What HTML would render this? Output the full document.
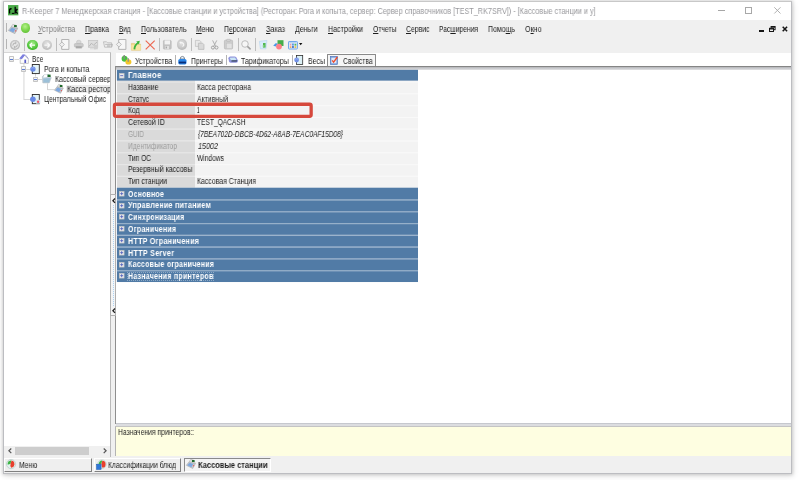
<!DOCTYPE html><html><head><meta charset="utf-8"><style>
html,body{margin:0;padding:0;}
body{width:800px;height:480px;overflow:hidden;position:relative;background:#fff;font-family:"Liberation Sans", sans-serif;}
.t{position:absolute;white-space:nowrap;transform-origin:0 50%;will-change:transform;font-family:"Liberation Sans", sans-serif;}
u{text-decoration:underline;text-decoration-thickness:1px;text-underline-offset:1px;}
</style></head><body>
<div style="position:absolute;left:3px;top:1px;width:789px;height:473px;box-shadow:0 0 3px 1px rgba(0,0,0,0.13), 1px 2px 6px rgba(0,0,0,0.12);background:#f0f0f0;"></div>
<div style="position:absolute;left:4px;top:2px;width:787px;height:18px;background:#fff;"></div>
<svg style="position:absolute;left:7.9px;top:5px;overflow:visible" width="10.4" height="10.4" viewBox="0 0 10.4 10.4"><rect x="0" y="0" width="10.4" height="10.4" fill="#5cb85a"/><rect x="0.6" y="0.6" width="9.2" height="9.2" fill="#4aa848"/><path d="M1.6 3.8 V8.6 M1.6 4.8 Q2.2 3.6 3.6 3.8" stroke="#000" stroke-width="1.3" fill="none"/><path d="M3.8 8.4 H6.4" stroke="#000" stroke-width="1.1"/><path d="M7.2 1.8 V8.6 M9.4 4 L7.4 6.2 L9.6 8.6" stroke="#000" stroke-width="1.3" fill="none"/></svg>
<div class="t" style="left:21.75px;top:5.99px;font-size:8.4px;line-height:10px;color:#98989c;font-weight:normal;font-style:normal;transform:scaleX(0.8684);">R-Keeper 7 Менеджерская станция - [Кассовые станции и устройства] (Ресторан: Рога и копыта, сервер: Сервер справочников [TEST_RK7SRV]) - [Кассовые станции и у]</div>
<div style="position:absolute;left:717.5px;top:10.3px;width:7px;height:0.9px;background:#a6a6a6;"></div>
<div style="position:absolute;left:744.5px;top:7.3px;width:7.4px;height:6.6px;border:1px solid #a8a8a8;box-sizing:border-box;"></div>
<svg style="position:absolute;left:773.8px;top:7.3px;overflow:visible" width="6.8" height="6.8" viewBox="0 0 6.8 6.8"><path d="M0.3 0.3 L6.5 6.5 M6.5 0.3 L0.3 6.5" stroke="#a8a8a8" stroke-width="0.9"/></svg>
<div style="position:absolute;left:5.6px;top:23.4px;width:1.2px;height:9px;background:#b4b4b4;"></div>
<svg style="position:absolute;left:8.2px;top:23.6px;overflow:visible" width="10" height="10" viewBox="0 0 9.6 9.6"><path d="M0.3 6.2 L3.2 2.6 L9.2 4.4 L6.6 9.3 Z" fill="#c4c8cc" stroke="#a0a4a8" stroke-width="0.5"/><path d="M1.2 6.2 L3.6 3.6 L7 4.8 L5.2 8.2 Z" fill="#7ea8e0"/><path d="M3.2 2.6 L4.6 0.3 L7.4 1 L9.2 4.4 Z" fill="#e6e6e6" stroke="#a8a8a8" stroke-width="0.5"/><rect x="5.8" y="1" width="2.6" height="2" fill="#1f6a2a"/><rect x="6.8" y="6" width="1.2" height="1.2" fill="#e06060"/></svg>
<div style="position:absolute;left:20.6px;top:23.4px;width:9.6px;height:9.6px;border-radius:50%;background:radial-gradient(circle at 45% 35%,#b6f08c 0%,#7fd84f 45%,#55b52e 100%);"></div>
<div class="t" style="left:37.70px;top:23.72px;font-size:8.3px;line-height:10px;color:#808080;font-weight:normal;font-style:normal;transform:scaleX(0.8613);"><u>У</u>стройства</div>
<div class="t" style="left:85.00px;top:23.72px;font-size:8.3px;line-height:10px;color:#1e1e1e;font-weight:normal;font-style:normal;transform:scaleX(0.8557);"><u>П</u>равка</div>
<div class="t" style="left:119.00px;top:23.72px;font-size:8.3px;line-height:10px;color:#1e1e1e;font-weight:normal;font-style:normal;transform:scaleX(0.7651);"><u>В</u>ид</div>
<div class="t" style="left:140.50px;top:23.72px;font-size:8.3px;line-height:10px;color:#1e1e1e;font-weight:normal;font-style:normal;transform:scaleX(0.8448);"><u>П</u>ользователь</div>
<div class="t" style="left:196.00px;top:23.72px;font-size:8.3px;line-height:10px;color:#1e1e1e;font-weight:normal;font-style:normal;transform:scaleX(0.8022);"><u>М</u>еню</div>
<div class="t" style="left:224.00px;top:23.72px;font-size:8.3px;line-height:10px;color:#1e1e1e;font-weight:normal;font-style:normal;transform:scaleX(0.8266);">П<u>е</u>рсонал</div>
<div class="t" style="left:265.50px;top:23.72px;font-size:8.3px;line-height:10px;color:#1e1e1e;font-weight:normal;font-style:normal;transform:scaleX(0.8723);"><u>З</u>аказ</div>
<div class="t" style="left:295.00px;top:23.72px;font-size:8.3px;line-height:10px;color:#1e1e1e;font-weight:normal;font-style:normal;transform:scaleX(0.8392);"><u>Д</u>еньги</div>
<div class="t" style="left:328.00px;top:23.72px;font-size:8.3px;line-height:10px;color:#1e1e1e;font-weight:normal;font-style:normal;transform:scaleX(0.8599);"><u>Н</u>астройки</div>
<div class="t" style="left:372.50px;top:23.72px;font-size:8.3px;line-height:10px;color:#1e1e1e;font-weight:normal;font-style:normal;transform:scaleX(0.8187);"><u>О</u>тчеты</div>
<div class="t" style="left:405.50px;top:23.72px;font-size:8.3px;line-height:10px;color:#1e1e1e;font-weight:normal;font-style:normal;transform:scaleX(0.8268);"><u>С</u>ервис</div>
<div class="t" style="left:439.00px;top:23.72px;font-size:8.3px;line-height:10px;color:#1e1e1e;font-weight:normal;font-style:normal;transform:scaleX(0.8080);">Рас<u>ш</u>ирения</div>
<div class="t" style="left:488.00px;top:23.72px;font-size:8.3px;line-height:10px;color:#1e1e1e;font-weight:normal;font-style:normal;transform:scaleX(0.8421);">Помо<u>щ</u>ь</div>
<div class="t" style="left:524.50px;top:23.72px;font-size:8.3px;line-height:10px;color:#1e1e1e;font-weight:normal;font-style:normal;transform:scaleX(0.8544);">О<u>к</u>но</div>
<div style="position:absolute;left:759.3px;top:29.6px;width:5px;height:2.1px;background:#151515;"></div>
<svg style="position:absolute;left:769.2px;top:26.2px;overflow:visible" width="6.6" height="5.9" viewBox="0 0 6.6 5.9"><rect x="2.1" y="0.5" width="4" height="3.2" fill="none" stroke="#151515" stroke-width="1"/><rect x="0.5" y="2.3" width="4" height="3.2" fill="#f0f0f0" stroke="#151515" stroke-width="1"/><rect x="0.5" y="2.3" width="4" height="1.2" fill="#151515"/><rect x="2.1" y="0.5" width="4" height="1.2" fill="#151515"/></svg>
<svg style="position:absolute;left:781.8px;top:25.8px;overflow:visible" width="5.8" height="6" viewBox="0 0 5.8 6"><path d="M0.7 0.7 L5.1 5.3 M5.1 0.7 L0.7 5.3" stroke="#151515" stroke-width="1.5"/></svg>
<div style="position:absolute;left:5.6px;top:39px;width:1.2px;height:10px;background:#b4b4b4;"></div>
<div style="position:absolute;left:24.4px;top:38px;width:1px;height:13px;background:#bdbdbd;"></div>
<div style="position:absolute;left:56px;top:38px;width:1px;height:13px;background:#bdbdbd;"></div>
<div style="position:absolute;left:159.4px;top:38px;width:1px;height:13px;background:#bdbdbd;"></div>
<div style="position:absolute;left:191px;top:38px;width:1px;height:13px;background:#bdbdbd;"></div>
<div style="position:absolute;left:237.5px;top:38px;width:1px;height:13px;background:#bdbdbd;"></div>
<div style="position:absolute;left:254.8px;top:38px;width:1px;height:13px;background:#bdbdbd;"></div>
<div style="position:absolute;left:10px;top:39.5px;width:10.2px;height:10.2px;border-radius:50%;background:radial-gradient(circle at 50% 45%,#d8d8d8 0 40%,#bdbdbd 60%,#a4a4a4 100%);"></div>
<svg style="position:absolute;left:10px;top:39.5px;overflow:visible" width="10.2" height="10.2" viewBox="0 0 10.2 10.2"><circle cx="5.1" cy="5.1" r="3.4" fill="#e6e6e6"/><path d="M2.8 5.6 Q2.9 2.9 5.6 2.9 M5.2 1.9 L6.3 2.9 L5.2 3.9 M7.4 4.6 Q7.3 7.3 4.6 7.3 M5 6.3 L3.9 7.3 L5 8.3" stroke="#a9a9a9" stroke-width="0.9" fill="none"/></svg>
<div style="position:absolute;left:27.4px;top:39.6px;width:10.4px;height:10.4px;border-radius:50%;background:radial-gradient(circle at 50% 35%,#a6ee8a 0%,#4fc43a 60%,#2f9a22 100%);"></div>
<svg style="position:absolute;left:27.4px;top:39.6px;overflow:visible" width="10.4" height="10.4" viewBox="0 0 10.4 10.4"><path d="M2.6 5.2 H8 M2.6 5.2 L5 2.9 M2.6 5.2 L5 7.5" stroke="#fff" stroke-width="1.3" fill="none"/></svg>
<div style="position:absolute;left:41.6px;top:39.6px;width:10.4px;height:10.4px;border-radius:50%;background:radial-gradient(circle at 50% 35%,#e4e4e4 0%,#c6c6c6 60%,#adadad 100%);"></div>
<svg style="position:absolute;left:41.6px;top:39.6px;overflow:visible" width="10.4" height="10.4" viewBox="0 0 10.4 10.4"><path d="M2.4 5.2 H7.8 M7.8 5.2 L5.4 2.9 M7.8 5.2 L5.4 7.5" stroke="#f8f8f8" stroke-width="1.3" fill="none"/></svg>
<svg style="position:absolute;left:58.8px;top:39.2px;overflow:visible" width="10.4" height="11" viewBox="0 0 10.4 11"><path d="M2.7 0.5 H9.9 V10.4 H2.7 Z" fill="#f7f7f7" stroke="#adadad" stroke-width="0.9"/><path d="M0.4 5.5 L2.9 3 L5.4 5.5 L2.9 8 Z" fill="#efefef" stroke="#b0b0b0" stroke-width="0.8"/></svg>
<svg style="position:absolute;left:116.4px;top:39.2px;overflow:visible" width="10.4" height="11" viewBox="0 0 10.4 11"><path d="M2.7 0.5 H9.9 V10.4 H2.7 Z" fill="#f7f7f7" stroke="#adadad" stroke-width="0.9"/><path d="M0.4 5.5 L2.9 3 L5.4 5.5 L2.9 8 Z" fill="#efefef" stroke="#b0b0b0" stroke-width="0.8"/></svg>
<svg style="position:absolute;left:74px;top:40.2px;overflow:visible" width="9.6" height="8.6" viewBox="0 0 9.6 8.6"><rect x="2.6" y="0.4" width="4.4" height="3.6" rx="1.6" fill="#d9d9d9" stroke="#bdbdbd" stroke-width="0.6"/><rect x="0.4" y="3.6" width="8.8" height="3.4" rx="0.8" fill="#cbcbcb" stroke="#b6b6b6" stroke-width="0.6"/><rect x="1.8" y="6.2" width="6" height="2.2" fill="#a9a9a9"/></svg>
<svg style="position:absolute;left:88px;top:40px;overflow:visible" width="10.2" height="9.6" viewBox="0 0 10.2 9.6"><rect x="0.5" y="0.5" width="9.2" height="6.8" fill="#dedede" stroke="#c6c6c6" stroke-width="0.8"/><path d="M1 6.5 L3.5 3.2 L5.5 5.2 L9 2" stroke="#b8b8b8" stroke-width="1" fill="none"/><rect x="6" y="5" width="3.8" height="4.3" fill="#cfcfcf"/><path d="M2 8.8 H8" stroke="#d0d0d0" stroke-width="0.8"/></svg>
<svg style="position:absolute;left:102.5px;top:40.8px;overflow:visible" width="10" height="7" viewBox="0 0 10 7"><path d="M0.5 0.8 H3.6 L4.6 1.8 H8.6 V6.2 H1.6 Z" fill="#ececec" stroke="#b8b8b8" stroke-width="0.8"/><path d="M2.2 3.4 H9.5 L8.6 6.2" stroke="#b0b0b0" stroke-width="0.8" fill="none"/><path d="M4 5 H7.5" stroke="#a0a0a0" stroke-width="0.8"/></svg>
<svg style="position:absolute;left:130.8px;top:39.6px;overflow:visible" width="10" height="10.6" viewBox="0 0 10 10.6"><path d="M0.4 3.4 H3.6 L4.4 4.2 H9.6 V10.2 H0.4 Z" fill="#f2d98c" stroke="#dcc070" stroke-width="0.6"/><path d="M0.4 5 H9.6 V10.2 H0.4 Z" fill="#f6e4a4"/><path d="M3.4 9.4 Q3.6 5 7.2 2.8" stroke="#3cb43c" stroke-width="1.8" fill="none"/><path d="M5.2 1.4 L8.8 0.8 L8 4.4 Z" fill="#3cb43c"/></svg>
<svg style="position:absolute;left:145.4px;top:39.9px;overflow:visible" width="10.4" height="10.1" viewBox="0 0 10.4 10.1"><path d="M0.7 0.7 L9.7 9.4 M9.7 0.7 L0.7 9.4" stroke="#ec6650" stroke-width="1.15"/></svg>
<svg style="position:absolute;left:163.4px;top:39.5px;overflow:visible" width="8.6" height="9.5" viewBox="0 0 8.6 9.5"><rect x="0.4" y="0.4" width="7.8" height="8.7" rx="0.8" fill="#c3c3c3" stroke="#b3b3b3" stroke-width="0.6"/><rect x="1.6" y="0.4" width="5.4" height="4" fill="#f2f2f2"/><rect x="2.2" y="6" width="3.8" height="3.1" fill="#e2e2e2"/><rect x="2.8" y="6.6" width="1" height="1.8" fill="#9a9a9a"/></svg>
<div style="position:absolute;left:176.9px;top:39.3px;width:10.5px;height:10.5px;border-radius:50%;background:radial-gradient(circle at 45% 40%,#e2e2e2 0%,#c8c8c8 50%,#a9a9a9 100%);"></div>
<svg style="position:absolute;left:176.9px;top:39.3px;overflow:visible" width="10.5" height="10.5" viewBox="0 0 10.5 10.5"><path d="M3 4 Q5 3 6.4 4.6 Q7.6 6.6 5.4 7.4" stroke="#f6f6f6" stroke-width="1.1" fill="none"/><path d="M2.2 3 L4.2 2.6 L3.8 4.8 Z" fill="#f6f6f6"/></svg>
<svg style="position:absolute;left:194.7px;top:39.8px;overflow:visible" width="9.4" height="9.8" viewBox="0 0 9.4 9.8"><path d="M0.4 0.4 H4.6 L6 1.8 V6.4 H0.4 Z" fill="#e9e9e9" stroke="#bdbdbd" stroke-width="0.7"/><path d="M3.4 3.2 H7.6 L9 4.6 V9.4 H3.4 Z" fill="#d9d9d9" stroke="#b6b6b6" stroke-width="0.7"/></svg>
<svg style="position:absolute;left:211px;top:39.8px;overflow:visible" width="7.4" height="9.8" viewBox="0 0 7.4 9.8"><path d="M1.6 0.4 L4.6 6.2 M5.8 0.4 L2.8 6.2" stroke="#a8a8a8" stroke-width="0.9" fill="none"/><circle cx="1.9" cy="7.6" r="1.5" fill="none" stroke="#9a9a9a" stroke-width="0.9"/><circle cx="5.5" cy="7.6" r="1.5" fill="none" stroke="#9a9a9a" stroke-width="0.9"/></svg>
<svg style="position:absolute;left:224px;top:39.2px;overflow:visible" width="9" height="10.4" viewBox="0 0 9 10.4"><rect x="0.4" y="1.2" width="8.2" height="8.8" rx="1" fill="#cdcdcd" stroke="#b8b8b8" stroke-width="0.7"/><rect x="2.6" y="0.3" width="3.8" height="2" rx="0.6" fill="#d6d6d6" stroke="#b0b0b0" stroke-width="0.5"/><rect x="2.4" y="4.2" width="5.6" height="5.4" fill="#e2e2e2" stroke="#c0c0c0" stroke-width="0.5"/></svg>
<svg style="position:absolute;left:240.7px;top:39.5px;overflow:visible" width="10.2" height="9.9" viewBox="0 0 10.2 9.9"><circle cx="4" cy="4" r="3.3" fill="#f6f6f6" stroke="#bcbcbc" stroke-width="1"/><path d="M6.4 6.4 L9.6 9.4" stroke="#9e9e9e" stroke-width="1.5"/></svg>
<svg style="position:absolute;left:259px;top:39.6px;overflow:visible" width="8.3" height="9.2" viewBox="0 0 8.3 9.2"><path d="M0.4 1.4 L7.9 0.4 L7 8.8 H1.4 Z" fill="#d9ecfb" stroke="#b4d4f0" stroke-width="0.6"/><rect x="4" y="3" width="2.6" height="4.6" fill="#52b852"/><rect x="3.8" y="5" width="1.6" height="2.4" fill="#7fd07f"/></svg>
<svg style="position:absolute;left:272.5px;top:39.9px;overflow:visible" width="11" height="9.6" viewBox="0 0 11 9.6"><rect x="4.5" y="0.2" width="6" height="5.8" fill="#46ad4a"/><path d="M0.2 5.8 L2.6 3.2 L4.6 3.6 L3 6.6 Z" fill="#4a96e6"/><circle cx="6" cy="6.6" r="2.9" fill="#ff8088"/></svg>
<svg style="position:absolute;left:287.5px;top:40.6px;overflow:visible" width="9.9" height="8.5" viewBox="0 0 9.9 8.5"><rect x="0.5" y="0.5" width="8.9" height="7.5" rx="0.6" fill="#e6f0fb" stroke="#70a6ea" stroke-width="1"/><rect x="1.3" y="1.3" width="7.3" height="1" fill="#a8c8f0"/><rect x="1.8" y="2.8" width="1.6" height="1.8" fill="#f0a0a8"/><rect x="4.2" y="2.6" width="1.5" height="2" fill="#3a86e0"/><rect x="6.5" y="2.8" width="1.8" height="1.8" fill="#58b858"/><rect x="1.8" y="5.2" width="1.6" height="1.8" fill="#f4a860"/><rect x="4.2" y="5" width="1.5" height="2" fill="#3060c0"/><rect x="6.5" y="5.2" width="1.8" height="1.8" fill="#e8c050"/></svg>
<svg style="position:absolute;left:299px;top:43px;overflow:visible" width="3.4" height="2.2" viewBox="0 0 3.4 2.2"><path d="M0 0 H3.4 L1.7 2.2 Z" fill="#111"/></svg>
<div style="position:absolute;left:4px;top:51.8px;width:107px;height:405px;background:#fff;border-top:1.8px solid #d6d6d6;border-right:1.3px solid #b9b9b9;box-sizing:border-box;"></div>
<div style="position:absolute;left:115.7px;top:52.7px;width:675.3px;height:13.5px;background:#fff;"></div>
<div style="position:absolute;left:115.3px;top:66.1px;width:675.7px;height:1px;background:#858585;"></div>
<div style="position:absolute;left:116.3px;top:67.1px;width:674.7px;height:2.7px;background:linear-gradient(#b4b5b9,#cfd0d3 60%,#e2e2e4);"></div>
<div style="position:absolute;left:115.3px;top:66.1px;width:1.1px;height:358px;background:#8e8e8e;"></div>
<div style="position:absolute;left:116.4px;top:69.8px;width:674.6px;height:353.2px;background:#fff;"></div>
<div style="position:absolute;left:116.4px;top:422.6px;width:674.6px;height:3.8px;background:#dcdde0;"></div>
<div style="position:absolute;left:116.4px;top:422.9px;width:674.6px;height:1.2px;background:#c6c8ce;"></div>
<div style="position:absolute;left:115.4px;top:426.2px;width:675.6px;height:30.3px;background:#fefee1;border-top:1px solid #c4c4c4;border-left:1px solid #b4b4b4;box-sizing:border-box;"></div>
<div class="t" style="left:117.80px;top:426.72px;font-size:8.3px;line-height:10px;color:#1e1e1e;font-weight:normal;font-style:normal;transform:scaleX(0.8177);">Назначения принтеров::</div>
<svg style="position:absolute;left:0;top:0" width="800" height="480"><rect x="14.5" y="59.1" width="4.5" height="0.9" fill="#d2d2d2"/><rect x="23.5" y="63.4" width="0.9" height="36" fill="#d2d2d2"/><rect x="23.5" y="99.0" width="8" height="0.9" fill="#d2d2d2"/><rect x="26.2" y="69.0" width="4.2" height="0.9" fill="#d2d2d2"/><rect x="35.0" y="73.8" width="0.9" height="2.8" fill="#d2d2d2"/><rect x="38.0" y="79.0" width="4.2" height="0.9" fill="#d2d2d2"/><rect x="47.0" y="83.4" width="0.9" height="6.2" fill="#d2d2d2"/><rect x="47.0" y="89.2" width="7.4" height="0.9" fill="#d2d2d2"/></svg>
<div style="position:absolute;left:9.2px;top:56.3px;width:5.3px;height:5.4px;border:0.9px solid #c4c4c4;border-radius:0.8px;box-sizing:border-box;background:linear-gradient(#fbfbfb,#e8e8e8);"></div>
<div style="position:absolute;left:10.45px;top:58.599999999999994px;width:2.8px;height:0.8px;background:#5c7cd4;"></div>
<div style="position:absolute;left:21.0px;top:66.3px;width:5.3px;height:5.4px;border:0.9px solid #c4c4c4;border-radius:0.8px;box-sizing:border-box;background:linear-gradient(#fbfbfb,#e8e8e8);"></div>
<div style="position:absolute;left:22.25px;top:68.6px;width:2.8px;height:0.8px;background:#5c7cd4;"></div>
<div style="position:absolute;left:32.7px;top:76.5px;width:5.3px;height:5.4px;border:0.9px solid #c4c4c4;border-radius:0.8px;box-sizing:border-box;background:linear-gradient(#fbfbfb,#e8e8e8);"></div>
<div style="position:absolute;left:33.95px;top:78.8px;width:2.8px;height:0.8px;background:#5c7cd4;"></div>
<svg style="position:absolute;left:18.9px;top:53.9px;overflow:visible" width="10" height="9.8" viewBox="0 0 10 9.8"><path d="M1.2 5 L5.4 1.2 L9.4 5.2 V9.4 H1.2 Z" fill="#fdfdfd" stroke="#b4b4b4" stroke-width="0.7"/><path d="M0.2 4.4 L3.8 0.2 L6.4 0.7 L2.8 5.2 Z" fill="#7c7ee0"/><path d="M6.2 0.8 L9.4 4.6" stroke="#8a8ad0" stroke-width="0.8"/><rect x="5.4" y="5.6" width="1.7" height="3.4" fill="#5a5cc8"/></svg>
<div class="t" style="left:32.00px;top:53.62px;font-size:8.3px;line-height:10px;color:#1e1e1e;font-weight:normal;font-style:normal;transform:scaleX(0.7904);">Все</div>
<svg style="position:absolute;left:30.2px;top:64.0px;overflow:visible" width="10" height="10" viewBox="0 0 10 10"><rect x="2.3" y="0.5" width="7" height="9.1" fill="#e4f4f8" stroke="#2a2a2a" stroke-width="0.9"/><circle cx="2.9" cy="5.1" r="2.7" fill="#6a8ae6"/><path d="M1.2 4.2 Q2.9 3.2 4.6 4.2" stroke="#b4c4ff" stroke-width="0.6" fill="none"/></svg>
<div class="t" style="left:43.50px;top:63.62px;font-size:8.3px;line-height:10px;color:#1e1e1e;font-weight:normal;font-style:normal;transform:scaleX(0.8450);">Рога и копыта</div>
<svg style="position:absolute;left:42px;top:74.4px;overflow:visible" width="9.6" height="9.2" viewBox="0 0 9.6 9.2"><path d="M0.3 2.6 L2.4 0.6 L6.2 0.6 L9.3 3.6 L7.2 8.9 L0.8 8.9 Z" fill="#c8d4dc" stroke="#a6b2ba" stroke-width="0.5"/><path d="M2.4 0.6 L5.4 0.6 L5 3 L1.4 3.4 Z" fill="#ffffff"/><path d="M1.2 4.6 L8.6 4.0 L7.2 8.4 L1.4 8.4 Z" fill="#9cc0d8"/><rect x="5.6" y="0.6" width="3" height="2.4" fill="#1f6a2a"/></svg>
<div style="position:absolute;left:54px;top:73px;width:55.5px;height:10px;overflow:hidden;">
<div class="t" style="left:1.00px;top:0.62px;font-size:8.3px;line-height:10px;color:#1e1e1e;font-weight:normal;font-style:normal;transform:scaleX(0.8397);">Кассовый сервер</div>
</div>
<div style="position:absolute;left:66px;top:84.6px;width:43.6px;height:8.9px;background:#ededed;"></div>
<svg style="position:absolute;left:54.2px;top:84px;overflow:visible" width="9.6" height="9.6" viewBox="0 0 9.6 9.6"><path d="M0.3 6.2 L3.2 2.6 L9.2 4.4 L6.6 9.3 Z" fill="#c4c8cc" stroke="#a0a4a8" stroke-width="0.5"/><path d="M1.2 6.2 L3.6 3.6 L7 4.8 L5.2 8.2 Z" fill="#7ea8e0"/><path d="M3.2 2.6 L4.6 0.3 L7.4 1 L9.2 4.4 Z" fill="#e6e6e6" stroke="#a8a8a8" stroke-width="0.5"/><rect x="5.8" y="1" width="2.6" height="2" fill="#1f6a2a"/><rect x="6.8" y="6" width="1.2" height="1.2" fill="#e06060"/></svg>
<div style="position:absolute;left:66px;top:83px;width:43.6px;height:10.5px;overflow:hidden;">
<div class="t" style="left:1.00px;top:0.62px;font-size:8.3px;line-height:10px;color:#1e1e1e;font-weight:normal;font-style:normal;transform:scaleX(0.8642);">Касса ресторана</div>
</div>
<svg style="position:absolute;left:30.2px;top:94px;overflow:visible" width="10.6" height="10" viewBox="0 0 10.6 10"><rect x="2.3" y="0.5" width="7" height="9.2" fill="#e4f4f8" stroke="#2a2a2a" stroke-width="0.9"/><circle cx="2.9" cy="5.2" r="2.8" fill="#6a8ae6"/><rect x="6" y="5.8" width="4.3" height="3.8" fill="#d4e8f4"/><circle cx="8.1" cy="7.7" r="1.2" fill="#f05a6e"/></svg>
<div class="t" style="left:43.60px;top:93.62px;font-size:8.3px;line-height:10px;color:#1e1e1e;font-weight:normal;font-style:normal;transform:scaleX(0.8044);">Центральный Офис</div>
<div style="position:absolute;left:4px;top:446px;width:106px;height:10.5px;background:#f0f0f0;"></div>
<div style="position:absolute;left:15.4px;top:446.5px;width:73.6px;height:8.8px;background:#cdcdcd;"></div>
<svg style="position:absolute;left:8px;top:448.2px;overflow:visible" width="4" height="5.6" viewBox="0 0 4 5.6"><path d="M3.3 0.5 L0.9 2.8 L3.3 5.1" stroke="#555" stroke-width="1.2" fill="none"/></svg>
<svg style="position:absolute;left:102.6px;top:448.2px;overflow:visible" width="4" height="5.6" viewBox="0 0 4 5.6"><path d="M0.7 0.5 L3.1 2.8 L0.7 5.1" stroke="#555" stroke-width="1.2" fill="none"/></svg>
<div style="position:absolute;left:110.2px;top:194px;width:6px;height:121.5px;background:#f5f5f5;border:1px solid #b0b0b0;box-sizing:border-box;"></div>
<svg style="position:absolute;left:111.7px;top:197.6px;overflow:visible" width="3.6" height="5.4" viewBox="0 0 3.6 5.4"><path d="M3 0.5 L0.9 2.7 L3 4.9" stroke="#222" stroke-width="1.3" fill="none"/></svg>
<svg style="position:absolute;left:111.7px;top:307.9px;overflow:visible" width="3.6" height="5.4" viewBox="0 0 3.6 5.4"><path d="M3 0.5 L0.9 2.7 L3 4.9" stroke="#222" stroke-width="1.3" fill="none"/></svg>
<div style="position:absolute;left:113.1px;top:204.5px;width:1px;height:101px;background:repeating-linear-gradient(#b0d2f0 0 1px,#eef5fb 1px 2px);"></div>
<div style="position:absolute;left:327.2px;top:54.3px;width:49px;height:12px;background:#f6f6f6;border:1px solid #8a8a8a;border-bottom:none;border-radius:1px 1px 0 0;box-sizing:border-box;"></div>
<div style="position:absolute;left:175.2px;top:55px;width:0.9px;height:10px;background:#b4b4b4;"></div>
<div style="position:absolute;left:225.6px;top:55px;width:0.9px;height:10px;background:#b4b4b4;"></div>
<div style="position:absolute;left:291.6px;top:55px;width:0.9px;height:10px;background:#b4b4b4;"></div>
<svg style="position:absolute;left:120.8px;top:54.8px;overflow:visible" width="11" height="10" viewBox="0 0 11 10"><path d="M0.6 3.8 Q0.6 0.8 3.4 0.8 Q6.4 0.8 6.6 3.6 Q6.6 6.6 3.6 6.8 Q0.6 6.8 0.6 3.8 Z" fill="#48c040"/><rect x="2.5" y="0" width="1.4" height="3.8" fill="#8a8a8a"/><path d="M4.4 7.2 Q4.4 4.2 7.4 4.2 Q10.4 4.2 10.4 7 Q10.4 9.6 7.4 9.6 Q4.4 9.6 4.4 7.2 Z" fill="#f2c62a"/><rect x="6.6" y="3.2" width="1.3" height="3.6" fill="#8f8f8f"/></svg>
<div class="t" style="left:135.20px;top:56.12px;font-size:8.3px;line-height:10px;color:#1e1e1e;font-weight:normal;font-style:normal;transform:scaleX(0.8593);">Устройства</div>
<svg style="position:absolute;left:178.2px;top:55.9px;overflow:visible" width="8.8" height="8.6" viewBox="0 0 8.8 8.6"><path d="M2.2 3 Q2.2 0.4 4.4 0.4 Q6.6 0.4 6.6 3 Z" fill="#eef6ff" stroke="#3a4a5a" stroke-width="0.6"/><rect x="0.3" y="3" width="8.2" height="5.4" rx="1.6" fill="#2a86e8"/><rect x="0.8" y="5.6" width="7.2" height="1.8" fill="#0a2e7a"/></svg>
<div class="t" style="left:191.00px;top:56.12px;font-size:8.3px;line-height:10px;color:#1e1e1e;font-weight:normal;font-style:normal;transform:scaleX(0.8268);">Принтеры</div>
<svg style="position:absolute;left:227.8px;top:56.2px;overflow:visible" width="10.4" height="7.2" viewBox="0 0 10.4 7.2"><path d="M0.4 2.2 Q0.4 0.4 2.4 0.4 L6.6 0.4 Q7.6 0.4 8.4 1.4 L10 4.4 Q10.2 6.8 8 6.8 L3 6.8 Q1.6 6.8 1 5.6 Z" fill="#8e92dc"/><path d="M1.6 1.8 L7 1.4 L8.6 4.2 L3 4.6 Z" fill="#c8e4f4"/><rect x="3.4" y="4.4" width="5.6" height="1.1" fill="#283848"/></svg>
<div class="t" style="left:241.30px;top:56.12px;font-size:8.3px;line-height:10px;color:#1e1e1e;font-weight:normal;font-style:normal;transform:scaleX(0.8343);">Тарификаторы</div>
<svg style="position:absolute;left:294.3px;top:55.2px;overflow:visible" width="9.2" height="10" viewBox="0 0 9.2 10"><rect x="2.4" y="0.5" width="6.3" height="9" fill="#dcf0f6" stroke="#303030" stroke-width="0.8"/><circle cx="2.6" cy="5" r="2.4" fill="#7090e8"/><path d="M1.2 4.2 Q2.6 3.4 4 4.2" stroke="#b8c8ff" stroke-width="0.6" fill="none"/></svg>
<div class="t" style="left:308.00px;top:56.12px;font-size:8.3px;line-height:10px;color:#1e1e1e;font-weight:normal;font-style:normal;transform:scaleX(0.8389);">Весы</div>
<svg style="position:absolute;left:330.4px;top:55.9px;overflow:visible" width="7.8" height="8.8" viewBox="0 0 7.8 8.8"><rect x="0.4" y="0.4" width="7" height="8" fill="#6a94d8" stroke="#4a70b8" stroke-width="0.6"/><rect x="1.3" y="1.6" width="5.2" height="5.8" fill="#dfe8f8"/><path d="M2.2 4.4 L3.6 6.2 L7.4 1" stroke="#ee4a2a" stroke-width="1.3" fill="none"/></svg>
<div class="t" style="left:343.30px;top:56.12px;font-size:8.3px;line-height:10px;color:#1e1e1e;font-weight:normal;font-style:normal;transform:scaleX(0.8151);">Свойства</div>
<svg style="position:absolute;left:0;top:0" width="800" height="480"><rect x="116.9" y="69.8" width="301.1" height="11.0" fill="#517ba6"/><rect x="116.9" y="80.80" width="78.10" height="12.58" fill="#dadada"/><rect x="195" y="80.80" width="223.00" height="12.58" fill="#f3f3f3"/><rect x="116.9" y="81.59" width="78.10" height="1" fill="#e8e8e8"/><rect x="195" y="81.59" width="223.00" height="1" fill="#f9f9f9"/><rect x="116.9" y="93.38" width="78.10" height="11.79" fill="#dadada"/><rect x="195" y="93.38" width="223.00" height="11.79" fill="#f3f3f3"/><rect x="116.9" y="93.38" width="78.10" height="1" fill="#e8e8e8"/><rect x="195" y="93.38" width="223.00" height="1" fill="#f9f9f9"/><rect x="116.9" y="105.17" width="78.10" height="11.79" fill="#dadada"/><rect x="195" y="105.17" width="223.00" height="11.79" fill="#f3f3f3"/><rect x="116.9" y="105.17" width="78.10" height="1" fill="#e8e8e8"/><rect x="195" y="105.17" width="223.00" height="1" fill="#f9f9f9"/><rect x="116.9" y="116.96" width="78.10" height="11.79" fill="#dadada"/><rect x="195" y="116.96" width="223.00" height="11.79" fill="#f3f3f3"/><rect x="116.9" y="116.96" width="78.10" height="1" fill="#e8e8e8"/><rect x="195" y="116.96" width="223.00" height="1" fill="#f9f9f9"/><rect x="116.9" y="128.75" width="78.10" height="11.79" fill="#dadada"/><rect x="195" y="128.75" width="223.00" height="11.79" fill="#f3f3f3"/><rect x="116.9" y="128.75" width="78.10" height="1" fill="#e8e8e8"/><rect x="195" y="128.75" width="223.00" height="1" fill="#f9f9f9"/><rect x="116.9" y="140.54" width="78.10" height="11.79" fill="#dadada"/><rect x="195" y="140.54" width="223.00" height="11.79" fill="#f3f3f3"/><rect x="116.9" y="140.54" width="78.10" height="1" fill="#e8e8e8"/><rect x="195" y="140.54" width="223.00" height="1" fill="#f9f9f9"/><rect x="116.9" y="152.33" width="78.10" height="11.79" fill="#dadada"/><rect x="195" y="152.33" width="223.00" height="11.79" fill="#f3f3f3"/><rect x="116.9" y="152.33" width="78.10" height="1" fill="#e8e8e8"/><rect x="195" y="152.33" width="223.00" height="1" fill="#f9f9f9"/><rect x="116.9" y="164.12" width="78.10" height="11.79" fill="#dadada"/><rect x="195" y="164.12" width="223.00" height="11.79" fill="#f3f3f3"/><rect x="116.9" y="164.12" width="78.10" height="1" fill="#e8e8e8"/><rect x="195" y="164.12" width="223.00" height="1" fill="#f9f9f9"/><rect x="116.9" y="175.91" width="78.10" height="11.79" fill="#dadada"/><rect x="195" y="175.91" width="223.00" height="11.79" fill="#f3f3f3"/><rect x="116.9" y="175.91" width="78.10" height="1" fill="#e8e8e8"/><rect x="195" y="175.91" width="223.00" height="1" fill="#f9f9f9"/><rect x="116.9" y="187.70" width="301.10" height="11.79" fill="#517ba6"/><rect x="116.9" y="199.49" width="301.10" height="11.79" fill="#517ba6"/><rect x="116.9" y="199.49" width="301.10" height="1.15" fill="#9bb3cc"/><rect x="116.9" y="211.28" width="301.10" height="11.79" fill="#517ba6"/><rect x="116.9" y="211.28" width="301.10" height="1.15" fill="#9bb3cc"/><rect x="116.9" y="223.07" width="301.10" height="11.79" fill="#517ba6"/><rect x="116.9" y="223.07" width="301.10" height="1.15" fill="#9bb3cc"/><rect x="116.9" y="234.86" width="301.10" height="11.79" fill="#517ba6"/><rect x="116.9" y="234.86" width="301.10" height="1.15" fill="#9bb3cc"/><rect x="116.9" y="246.65" width="301.10" height="11.79" fill="#517ba6"/><rect x="116.9" y="246.65" width="301.10" height="1.15" fill="#9bb3cc"/><rect x="116.9" y="258.44" width="301.10" height="11.79" fill="#517ba6"/><rect x="116.9" y="258.44" width="301.10" height="1.15" fill="#9bb3cc"/><rect x="116.9" y="270.23" width="301.10" height="11.79" fill="#517ba6"/><rect x="116.9" y="270.23" width="301.10" height="1.15" fill="#9bb3cc"/></svg>
<svg style="position:absolute;left:119px;top:72.6px;overflow:visible" width="5.4" height="5.4" viewBox="0 0 5.4 5.4"><rect x="0.3" y="0.3" width="4.8" height="4.8" fill="#ebebeb" stroke="#c0c0c0" stroke-width="0.6"/><rect x="1.2" y="2.25" width="3" height="0.9" fill="#5464c0"/></svg>
<div class="t" style="left:128.00px;top:70.12px;font-size:8.3px;line-height:10px;color:#fff;font-weight:bold;font-style:normal;transform:scaleX(0.9285);letter-spacing:0.3px;">Главное</div>
<div class="t" style="left:128.00px;top:81.86px;font-size:8.3px;line-height:10px;color:#1e1e1e;font-weight:normal;font-style:normal;transform:scaleX(0.8199);">Название</div>
<div class="t" style="left:197.00px;top:81.86px;font-size:8.3px;line-height:10px;color:#1e1e1e;font-weight:normal;font-style:normal;transform:scaleX(0.8334);">Касса ресторана</div>
<div class="t" style="left:128.00px;top:93.65px;font-size:8.3px;line-height:10px;color:#1e1e1e;font-weight:normal;font-style:normal;transform:scaleX(0.8005);">Статус</div>
<div class="t" style="left:197.00px;top:93.65px;font-size:8.3px;line-height:10px;color:#1e1e1e;font-weight:normal;font-style:normal;transform:scaleX(0.8315);">Активный</div>
<div class="t" style="left:128.00px;top:105.44px;font-size:8.3px;line-height:10px;color:#1e1e1e;font-weight:normal;font-style:normal;transform:scaleX(0.8221);">Код</div>
<div class="t" style="left:197.00px;top:105.44px;font-size:8.3px;line-height:10px;color:#1e1e1e;font-weight:normal;font-style:normal;transform:scaleX(0.5405);">1</div>
<div class="t" style="left:128.00px;top:117.23px;font-size:8.3px;line-height:10px;color:#1e1e1e;font-weight:normal;font-style:normal;transform:scaleX(0.8639);">Сетевой ID</div>
<div class="t" style="left:197.00px;top:117.23px;font-size:8.3px;line-height:10px;color:#1e1e1e;font-weight:normal;font-style:normal;transform:scaleX(0.7986);">TEST_QACASH</div>
<div class="t" style="left:128.00px;top:129.02px;font-size:8.3px;line-height:10px;color:#9c9c9c;font-weight:normal;font-style:normal;transform:scaleX(0.7711);">GUID</div>
<div class="t" style="left:198.30px;top:129.02px;font-size:8.3px;line-height:10px;color:#1e1e1e;font-weight:normal;font-style:italic;transform:scaleX(0.7919);">{7BEA702D-DBCB-4D62-A8AB-7EAC0AF15D08}</div>
<div class="t" style="left:128.00px;top:140.81px;font-size:8.3px;line-height:10px;color:#9c9c9c;font-weight:normal;font-style:normal;transform:scaleX(0.8023);">Идентификатор</div>
<div class="t" style="left:198.30px;top:140.81px;font-size:8.3px;line-height:10px;color:#1e1e1e;font-weight:normal;font-style:italic;transform:scaleX(0.8666);">15002</div>
<div class="t" style="left:128.00px;top:152.60px;font-size:8.3px;line-height:10px;color:#1e1e1e;font-weight:normal;font-style:normal;transform:scaleX(0.8044);">Тип ОС</div>
<div class="t" style="left:197.00px;top:152.60px;font-size:8.3px;line-height:10px;color:#1e1e1e;font-weight:normal;font-style:normal;transform:scaleX(0.8019);">Windows</div>
<div class="t" style="left:128.00px;top:164.39px;font-size:8.3px;line-height:10px;color:#1e1e1e;font-weight:normal;font-style:normal;transform:scaleX(0.8446);">Резервный кассовы</div>
<div class="t" style="left:128.00px;top:176.18px;font-size:8.3px;line-height:10px;color:#1e1e1e;font-weight:normal;font-style:normal;transform:scaleX(0.8259);">Тип станции</div>
<div class="t" style="left:197.00px;top:176.18px;font-size:8.3px;line-height:10px;color:#1e1e1e;font-weight:normal;font-style:normal;transform:scaleX(0.8315);">Кассовая Станция</div>
<svg style="position:absolute;left:119px;top:190.89999999999998px;overflow:visible" width="5.4" height="5.4" viewBox="0 0 5.4 5.4"><rect x="0.3" y="0.3" width="4.8" height="4.8" fill="#ebebeb" stroke="#c0c0c0" stroke-width="0.6"/><rect x="1.2" y="2.25" width="3" height="0.9" fill="#5464c0"/><rect x="2.25" y="1.2" width="0.9" height="3" fill="#5464c0"/></svg>
<div class="t" style="left:127.80px;top:188.62px;font-size:8.3px;line-height:10px;color:#fff;font-weight:bold;font-style:normal;transform:scaleX(0.8306);letter-spacing:0.3px;">Основное</div>
<svg style="position:absolute;left:119px;top:202.69px;overflow:visible" width="5.4" height="5.4" viewBox="0 0 5.4 5.4"><rect x="0.3" y="0.3" width="4.8" height="4.8" fill="#ebebeb" stroke="#c0c0c0" stroke-width="0.6"/><rect x="1.2" y="2.25" width="3" height="0.9" fill="#5464c0"/><rect x="2.25" y="1.2" width="0.9" height="3" fill="#5464c0"/></svg>
<div class="t" style="left:127.80px;top:200.41px;font-size:8.3px;line-height:10px;color:#fff;font-weight:bold;font-style:normal;transform:scaleX(0.8593);letter-spacing:0.3px;">Управление питанием</div>
<svg style="position:absolute;left:119px;top:214.47999999999996px;overflow:visible" width="5.4" height="5.4" viewBox="0 0 5.4 5.4"><rect x="0.3" y="0.3" width="4.8" height="4.8" fill="#ebebeb" stroke="#c0c0c0" stroke-width="0.6"/><rect x="1.2" y="2.25" width="3" height="0.9" fill="#5464c0"/><rect x="2.25" y="1.2" width="0.9" height="3" fill="#5464c0"/></svg>
<div class="t" style="left:127.80px;top:212.20px;font-size:8.3px;line-height:10px;color:#fff;font-weight:bold;font-style:normal;transform:scaleX(0.8213);letter-spacing:0.3px;">Синхронизация</div>
<svg style="position:absolute;left:119px;top:226.26999999999998px;overflow:visible" width="5.4" height="5.4" viewBox="0 0 5.4 5.4"><rect x="0.3" y="0.3" width="4.8" height="4.8" fill="#ebebeb" stroke="#c0c0c0" stroke-width="0.6"/><rect x="1.2" y="2.25" width="3" height="0.9" fill="#5464c0"/><rect x="2.25" y="1.2" width="0.9" height="3" fill="#5464c0"/></svg>
<div class="t" style="left:127.80px;top:223.99px;font-size:8.3px;line-height:10px;color:#fff;font-weight:bold;font-style:normal;transform:scaleX(0.8416);letter-spacing:0.3px;">Ограничения</div>
<svg style="position:absolute;left:119px;top:238.06px;overflow:visible" width="5.4" height="5.4" viewBox="0 0 5.4 5.4"><rect x="0.3" y="0.3" width="4.8" height="4.8" fill="#ebebeb" stroke="#c0c0c0" stroke-width="0.6"/><rect x="1.2" y="2.25" width="3" height="0.9" fill="#5464c0"/><rect x="2.25" y="1.2" width="0.9" height="3" fill="#5464c0"/></svg>
<div class="t" style="left:127.80px;top:235.78px;font-size:8.3px;line-height:10px;color:#fff;font-weight:bold;font-style:normal;transform:scaleX(0.8607);letter-spacing:0.3px;">HTTP Ограничения</div>
<svg style="position:absolute;left:119px;top:249.84999999999997px;overflow:visible" width="5.4" height="5.4" viewBox="0 0 5.4 5.4"><rect x="0.3" y="0.3" width="4.8" height="4.8" fill="#ebebeb" stroke="#c0c0c0" stroke-width="0.6"/><rect x="1.2" y="2.25" width="3" height="0.9" fill="#5464c0"/><rect x="2.25" y="1.2" width="0.9" height="3" fill="#5464c0"/></svg>
<div class="t" style="left:127.80px;top:247.57px;font-size:8.3px;line-height:10px;color:#fff;font-weight:bold;font-style:normal;transform:scaleX(0.8725);letter-spacing:0.3px;">HTTP Server</div>
<svg style="position:absolute;left:119px;top:261.64px;overflow:visible" width="5.4" height="5.4" viewBox="0 0 5.4 5.4"><rect x="0.3" y="0.3" width="4.8" height="4.8" fill="#ebebeb" stroke="#c0c0c0" stroke-width="0.6"/><rect x="1.2" y="2.25" width="3" height="0.9" fill="#5464c0"/><rect x="2.25" y="1.2" width="0.9" height="3" fill="#5464c0"/></svg>
<div class="t" style="left:127.80px;top:259.36px;font-size:8.3px;line-height:10px;color:#fff;font-weight:bold;font-style:normal;transform:scaleX(0.8460);letter-spacing:0.3px;">Кассовые ограничения</div>
<svg style="position:absolute;left:119px;top:273.42999999999995px;overflow:visible" width="5.4" height="5.4" viewBox="0 0 5.4 5.4"><rect x="0.3" y="0.3" width="4.8" height="4.8" fill="#ebebeb" stroke="#c0c0c0" stroke-width="0.6"/><rect x="1.2" y="2.25" width="3" height="0.9" fill="#5464c0"/><rect x="2.25" y="1.2" width="0.9" height="3" fill="#5464c0"/></svg>
<div class="t" style="left:127.80px;top:271.15px;font-size:8.3px;line-height:10px;color:#fff;font-weight:bold;font-style:normal;transform:scaleX(0.8461);letter-spacing:0.3px;">Назначения принтеров</div>
<div style="position:absolute;left:126.7px;top:272.42999999999995px;width:87px;height:9px;border:0.7px dotted rgba(255,255,255,0.35);box-sizing:border-box;"></div>
<svg style="position:absolute;left:0;top:0" width="800" height="480"><rect x="114.45" y="104.25" width="196.7" height="12.1" rx="1.5" fill="none" stroke="#d6483c" stroke-width="3.3"/></svg>
<div style="position:absolute;left:4.4px;top:457.5px;width:88px;height:14px;background:#efefef;border-top:1px solid #fff;border-left:1px solid #fff;border-right:1.6px solid #808080;border-bottom:1.8px solid #808080;box-sizing:border-box;"></div>
<div style="position:absolute;left:93.8px;top:457.5px;width:87.5px;height:14px;background:#efefef;border-top:1px solid #fff;border-left:1px solid #fff;border-right:1.6px solid #808080;border-bottom:1.8px solid #808080;box-sizing:border-box;"></div>
<div style="position:absolute;left:183.7px;top:457.5px;width:87px;height:14px;background:#f3f3f3;border-top:1px solid #8a8a8a;border-left:1px solid #8a8a8a;border-right:1px solid #fff;border-bottom:1px solid #fff;box-sizing:border-box;"></div>
<svg style="position:absolute;left:6.4px;top:459.4px;overflow:visible" width="10.2" height="10.2" viewBox="0 0 10.2 10.2"><circle cx="5.1" cy="5.1" r="4.6" fill="#e4f2f0" stroke="#b4c8c4" stroke-width="0.7"/><path d="M5.4 1.4 A3.7 3.7 0 0 0 1.6 5.4 Q3.2 5.8 4.6 4.2 Z" fill="#3cb443"/><path d="M5.6 1.6 A3.6 3.6 0 0 1 5.2 8.7 Q3.8 7 4.6 4.4 Z" fill="#e8402e"/></svg>
<div class="t" style="left:18.60px;top:459.52px;font-size:8.3px;line-height:10px;color:#1e1e1e;font-weight:normal;font-style:normal;transform:scaleX(0.8111);">Меню</div>
<svg style="position:absolute;left:95.8px;top:458.8px;overflow:visible" width="10.4" height="11" viewBox="0 0 10.4 11"><circle cx="6" cy="5.2" r="4.3" fill="#e4f2f0" stroke="#b4c8c4" stroke-width="0.6"/><path d="M6.2 1.6 A3.5 3.5 0 0 0 2.6 5.4 L5.4 4.8 Z" fill="#3cb443"/><path d="M6.4 1.8 A3.4 3.4 0 0 1 6 8.6 L5.4 4.8 Z" fill="#e8402e"/><rect x="0.5" y="5.2" width="4.6" height="5.3" fill="#2f78d8" stroke="#1e5cb0" stroke-width="0.5"/></svg>
<div class="t" style="left:108.00px;top:459.52px;font-size:8.3px;line-height:10px;color:#1e1e1e;font-weight:normal;font-style:normal;transform:scaleX(0.8139);">Классификации блюд</div>
<svg style="position:absolute;left:186.2px;top:459.2px;overflow:visible" width="9.8" height="9.8" viewBox="0 0 9.6 9.6"><path d="M0.3 6.2 L3.2 2.6 L9.2 4.4 L6.6 9.3 Z" fill="#c4c8cc" stroke="#a0a4a8" stroke-width="0.5"/><path d="M1.2 6.2 L3.6 3.6 L7 4.8 L5.2 8.2 Z" fill="#7ea8e0"/><path d="M3.2 2.6 L4.6 0.3 L7.4 1 L9.2 4.4 Z" fill="#e6e6e6" stroke="#a8a8a8" stroke-width="0.5"/><rect x="5.8" y="1" width="2.6" height="2" fill="#1f6a2a"/><rect x="6.8" y="6" width="1.2" height="1.2" fill="#e06060"/></svg>
<div class="t" style="left:198.00px;top:459.52px;font-size:8.3px;line-height:10px;color:#1e1e1e;font-weight:bold;font-style:normal;transform:scaleX(0.9050);">Кассовые станции</div>
<div style="position:absolute;left:3px;top:1px;width:789px;height:473px;border:1px solid #bcbdc1;border-top-color:#c8c8c8;box-sizing:border-box;"></div>
</body></html>
